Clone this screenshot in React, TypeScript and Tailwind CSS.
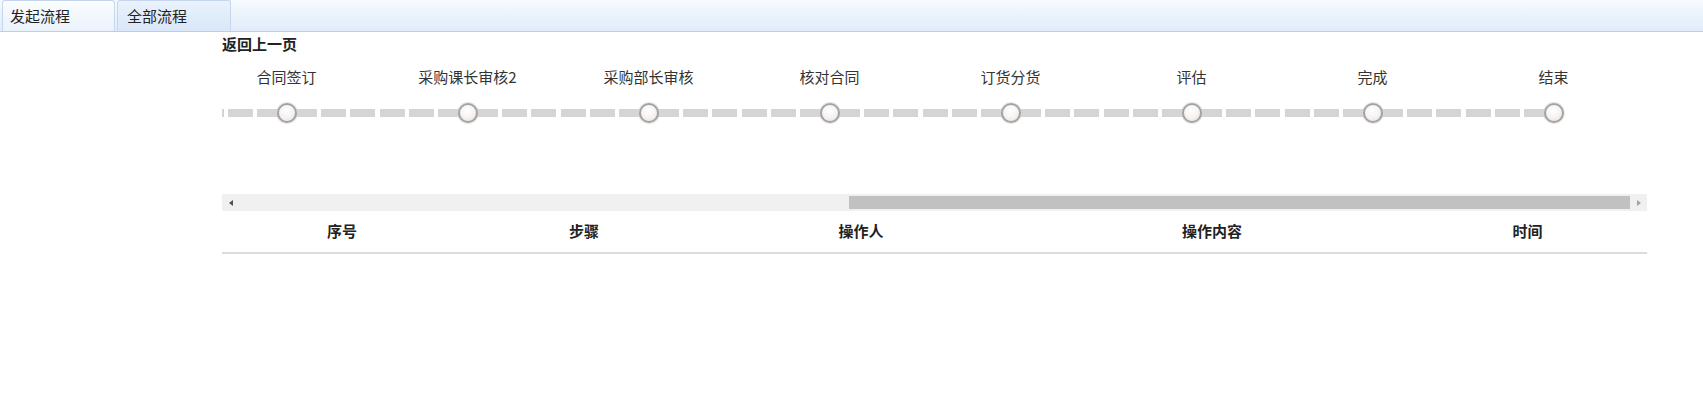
const steps = ['合同签订', '采购课长审核2', '采购部长审核', '核对合同', '订货分货', '评估', '完成', '结束']

const columns = [
  { label: '序号', w: 'w-[240px]' },
  { label: '步骤', w: 'w-[244px]' },
  { label: '操作人', w: 'w-[310px]' },
  { label: '操作内容', w: 'w-[392px]' },
  { label: '时间', w: 'w-[239px]' },
]

function Dash({ className = 'w-[25px]' }: { className?: string }) {
  return <div className={`h-[8px] bg-[#d5d5d5] shrink-0 ${className}`} />
}

function Step({ label, last }: { label: string; last: boolean }) {
  return (
    <div className="w-[181px] shrink-0 flex flex-col">
      <div className="h-[20px] leading-[20px] text-center text-[15px] text-[#333] whitespace-nowrap">{label}</div>
      <div className="mt-[16px] h-[20px] relative flex items-center gap-[4px] pl-[2.5px]">
        <Dash />
        <Dash />
        <Dash className={last ? 'w-[30px]' : 'w-[60px]'} />
        {!last && <Dash />}
        {!last && <Dash />}
        <div className="absolute left-[80.5px] top-0 w-[20px] h-[20px] rounded-full border-2 border-[#a3a3a3] bg-[radial-gradient(circle_at_45%_35%,#ffffff_0%,#f7f3f1_50%,#e8dfdc_100%)] shadow-[0_0_0_1px_rgba(215,215,215,0.6)]" />
      </div>
    </div>
  )
}

export default function App() {
  return (
    <div className="w-[1703px] h-[409px] bg-white text-[#333] font-['Noto_Sans_CJK_SC','Noto_Sans',sans-serif]">
      <div className="h-[32px] border-b border-[#b8d0ee] bg-gradient-to-b from-[#f7faff] to-[#e1ebf9] flex items-end pl-[2px] gap-[2px]">
        <div className="w-[113px] h-[31px] rounded-t-[3px] border border-b-0 border-[#c4d7ef] bg-gradient-to-b from-[#fbfdff] to-[#ebf2fc] text-[15px] pl-[7px] flex items-center text-[#222]">
          发起流程
        </div>
        <div className="w-[114px] h-[31px] rounded-t-[3px] border border-b-0 border-[#c4d7ef] bg-gradient-to-b from-[#eaf2fd] to-[#d9e7f9] text-[15px] pl-[9px] flex items-center text-[#222]">
          全部流程
        </div>
      </div>

      <div className="pl-[222px] pr-[56px]">
        <div className="mt-[2px] h-[20px] leading-[20px] text-[15px] font-bold text-[#222]">返回上一页</div>

        <div className="overflow-hidden mt-[13px]">
          <div className="flex -ml-[26px] pb-[71px]">
            {steps.map((s, i) => (
              <Step key={s} label={s} last={i === steps.length - 1} />
            ))}
          </div>
        </div>

        <div className="h-[17px] bg-[#f0f0f0] flex items-center">
          <div className="w-[17px] h-[17px] flex items-center justify-center">
            <div className="w-0 h-0 border-y-[3.5px] border-y-transparent border-r-[4px] border-r-[#505050]" />
          </div>
          <div className="flex-1" />
          <div className="w-[781px] h-[13px] bg-[#c1c1c1]" />
          <div className="w-[17px] h-[17px] flex items-center justify-center">
            <div className="w-0 h-0 border-y-[3.5px] border-y-transparent border-l-[4px] border-l-[#a3a3a3]" />
          </div>
        </div>

        <div className="flex h-[43px] items-center border-b-2 border-[#dcdcdc]">
          {columns.map((c) => (
            <div key={c.label} className={`${c.w} text-center text-[15px] font-bold text-[#222]`}>
              {c.label}
            </div>
          ))}
        </div>
      </div>
    </div>
  )
}
